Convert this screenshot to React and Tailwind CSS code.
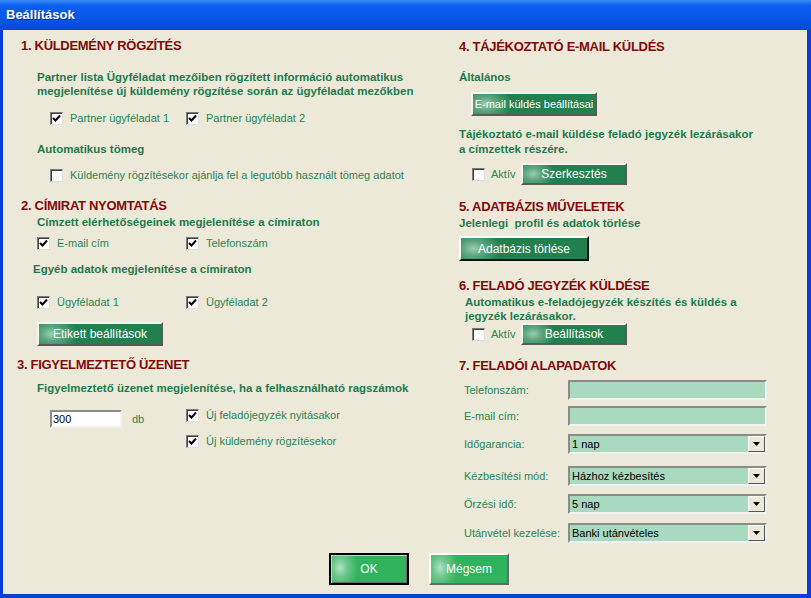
import React from 'react';

const green = 'text-[#1f7a4d]';
const label = 'text-[#2b8456]';

const Check = ({ checked }) => (
    <span className="inline-flex w-[13px] h-[13px] shrink-0 bg-white border-t border-l border-t-[#7a7a7a] border-l-[#7a7a7a] border-b border-r border-b-[#dcdcdc] border-r-[#dcdcdc] shadow-[inset_1px_1px_0_#404040] items-center justify-center">
        {checked && (
            <svg width="9" height="9" viewBox="0 0 9 9">
                <path d="M1 4 L3.5 6.5 L8 1.5" fill="none" stroke="#000" strokeWidth="2" />
            </svg>
        )}
    </span>
);

const CheckLabel = ({ checked, children, className = '' }) => (
    <div className={'flex items-center h-[16px] ' + className}>
        <Check checked={checked} />
        <span className={'ml-[7px] text-[11px] leading-[14px] ' + label}>{children}</span>
    </div>
);

const Heading = ({ children }) => (
    <h2 className="text-[13px] leading-[16px] font-bold text-[#820a0a] tracking-[-0.3px]">{children}</h2>
);

const GreenBtn = ({ children, className = '' }) => (
    <button
        className={
            'flex items-center justify-center text-white text-[11px] bg-[radial-gradient(ellipse_22%_90%_at_10%_50%,#9ccdb0_0%,#5aa57d_40%,#22804f_100%)] border-2 border-t-[#f4f4f4] border-l-[#f4f4f4] border-b-[#5a5a5a] border-r-[#5a5a5a] ' +
            className
        }
    >
        {children}
    </button>
);

const BigBtn = ({ children, className = '' }) => (
    <button
        className={
            'flex items-center justify-center text-white text-[12px] w-[80px] h-[32px] bg-[radial-gradient(ellipse_24%_85%_at_12%_45%,#b5e2c4_0%,#6cc78c_40%,#2fb35c_100%)] ' +
            className
        }
    >
        {children}
    </button>
);

const Field = ({ text, value, select, className = '' }) => (
    <div className={'flex items-center ' + className}>
        <span className={'w-[104px] text-[11px] ' + label}>{text}</span>
        <div className="w-[199px] h-[20px] flex items-center bg-[#a9d9bf] border-2 border-t-[#8b8b8b] border-l-[#8b8b8b] border-b-[#f2f2f2] border-r-[#f2f2f2]">
            <span className="flex-1 pl-[2px] text-[11px] text-black">{value}</span>
            {select && (
                <span className="w-[17px] h-[16px] flex items-center justify-center bg-[#ece9d8] border border-t-white border-l-white border-b-[#555] border-r-[#555]">
                    <svg width="7" height="4" viewBox="0 0 7 4">
                        <path d="M0 0 H7 L3.5 4 Z" fill="#000" />
                    </svg>
                </span>
            )}
        </div>
    </div>
);

const App = () => {
    return (
        <div className="w-[811px] h-[598px] overflow-hidden flex flex-col font-['Liberation_Sans',Arial,sans-serif] bg-[#ece9d8]">
            <div className="h-[30px] shrink-0 flex items-center pl-[6px] bg-[linear-gradient(180deg,#3b8cf7_0%,#0a5ff0_18%,#0757e8_60%,#0549d6_100%)]">
                <span className="text-white font-bold text-[13px] [text-shadow:1px_1px_0_#0a2f8a]">Beállítások</span>
            </div>

            <div className="flex-1 flex flex-col border-l-[3px] border-r-[4px] border-b-[4px] border-[#0a3fd4]">
                <div className="flex">
                    {/* left column */}
                    <div className="w-[439px] pl-[14px] pt-[8px] flex flex-col">
                        <div className="ml-[4px]">
                            <Heading>1. KÜLDEMÉNY RÖGZÍTÉS</Heading>
                        </div>
                        <p className={'ml-[20px] mt-[16px] text-[11.5px] leading-[14px] font-bold ' + green}>
                            Partner lista Ügyféladat mezőiben rögzített információ automatikus
                            <br />
                            megjelenítése új küldemény rögzítése során az ügyféladat mezőkben
                        </p>
                        <div className="flex mt-[12px] ml-[33px]">
                            <CheckLabel checked className="w-[136px]">Partner ügyféladat 1</CheckLabel>
                            <CheckLabel checked>Partner ügyféladat 2</CheckLabel>
                        </div>
                        <p className={'ml-[20px] mt-[16px] text-[11.5px] leading-[14px] font-bold ' + green}>Automatikus tömeg</p>
                        <CheckLabel className="ml-[33px] mt-[11px]">Küldemény rögzítésekor ajánlja fel a legutóbb használt tömeg adatot</CheckLabel>

                        <div className="mt-[15px] ml-[4px]">
                            <Heading>2. CÍMIRAT NYOMTATÁS</Heading>
                        </div>
                        <p className={'ml-[20px] mt-[1px] text-[11.5px] leading-[14px] font-bold ' + green}>Címzett elérhetőségeinek megjelenítése a címiraton</p>
                        <div className="flex mt-[6px] ml-[20px]">
                            <CheckLabel checked className="w-[149px]">E-mail cím</CheckLabel>
                            <CheckLabel checked>Telefonszám</CheckLabel>
                        </div>
                        <p className={'ml-[16px] mt-[11px] text-[11.5px] leading-[14px] font-bold ' + green}>Egyéb adatok megjelenítése a címiraton</p>
                        <div className="flex mt-[18px] ml-[20px]">
                            <CheckLabel checked className="w-[149px]">Ügyféladat 1</CheckLabel>
                            <CheckLabel checked>Ügyféladat 2</CheckLabel>
                        </div>
                        <GreenBtn className="ml-[20px] mt-[12px] w-[126px] h-[24px] text-[12px]">Etikett beállítások</GreenBtn>

                        <div className="mt-[11px]">
                            <Heading>3. FIGYELMEZTETŐ ÜZENET</Heading>
                        </div>
                        <p className={'ml-[20px] mt-[8px] text-[11.5px] leading-[14px] font-bold ' + green}>
                            Figyelmeztető üzenet megjelenítése, ha a felhasználható ragszámok
                        </p>
                        <div className="flex mt-[12px] ml-[33px]">
                            <div className="w-[136px] flex items-center h-[24px] self-start">
                                <div className="w-[72px] h-[18px] bg-white border-2 border-t-[#8b8b8b] border-l-[#8b8b8b] border-b-[#f2f2f2] border-r-[#f2f2f2] flex items-center pl-[1px] text-[11px] text-black">
                                    300
                                </div>
                                <span className={'ml-[10px] text-[11px] ' + label}>db</span>
                            </div>
                            <div className="flex flex-col gap-[10px]">
                                <CheckLabel checked>Új feladójegyzék nyitásakor</CheckLabel>
                                <CheckLabel checked>Új küldemény rögzítésekor</CheckLabel>
                            </div>
                        </div>
                    </div>

                    {/* right column */}
                    <div className="flex-1 pl-[17px] pt-[9px] flex flex-col">
                        <Heading>4. TÁJÉKOZTATÓ E-MAIL KÜLDÉS</Heading>
                        <p className={'mt-[15px] text-[11.5px] leading-[14px] font-bold ' + green}>Általános</p>
                        <GreenBtn className="ml-[12px] mt-[8px] w-[126px] h-[24px]">E-mail küldés beállításai</GreenBtn>
                        <p className={'mt-[11px] text-[11.5px] leading-[15px] font-bold ' + green}>
                            Tájékoztató e-mail küldése feladó jegyzék lezárásakor
                            <br />
                            a címzettek részére.
                        </p>
                        <div className="flex items-center h-[22px] mt-[6px] ml-[13px]">
                            <Check />
                            <span className={'ml-[6px] w-[30px] text-[11px] ' + label}>Aktív</span>
                            <GreenBtn className="w-[106px] h-[22px] text-[12px]">Szerkesztés</GreenBtn>
                        </div>

                        <div className="mt-[14px]">
                            <Heading>5. ADATBÁZIS MŰVELETEK</Heading>
                        </div>
                        <p className={'mt-[1px] text-[11.5px] leading-[14px] font-bold whitespace-pre ' + green}>Jelenlegi  profil és adatok törlése</p>
                        <button className="mt-[6px] w-[130px] h-[25px] flex items-center justify-center text-white text-[12px] bg-[radial-gradient(ellipse_22%_90%_at_10%_50%,#9ccdb0_0%,#5aa57d_40%,#22804f_100%)] border-2 border-t-white border-l-white border-b-[#111] border-r-[#111]">
                            Adatbázis törlése
                        </button>

                        <div className="mt-[17px]">
                            <Heading>6. FELADÓ JEGYZÉK KÜLDÉSE</Heading>
                        </div>
                        <p className={'ml-[6px] mt-[1px] text-[11.5px] leading-[14px] font-bold ' + green}>
                            Automatikus e-feladójegyzék készítés és küldés a
                            <br />
                            jegyzék lezárásakor.
                        </p>
                        <div className="flex items-center h-[22px] ml-[13px]">
                            <Check />
                            <span className={'ml-[6px] w-[30px] text-[11px] ' + label}>Aktív</span>
                            <GreenBtn className="w-[106px] h-[22px] text-[12px]">Beállítások</GreenBtn>
                        </div>

                        <div className="mt-[13px]">
                            <Heading>7. FELADÓI ALAPADATOK</Heading>
                        </div>
                        <div className="ml-[5px] flex flex-col">
                            <Field className="mt-[6px]" text="Telefonszám:" />
                            <Field className="mt-[6px]" text="E-mail cím:" />
                            <Field className="mt-[8px]" text="Időgarancia:" value="1 nap" select />
                            <Field className="mt-[12px]" text="Kézbesítési mód:" value="Házhoz kézbesítés" select />
                            <Field className="mt-[8px]" text="Őrzési idő:" value="5 nap" select />
                            <Field className="mt-[9px]" text="Utánvétel kezelése:" value="Banki utánvételes" select />
                        </div>
                    </div>
                </div>

                <div className="flex mt-[10px] pl-[326px] gap-[20px]">
                    <BigBtn className="border-2 border-black shadow-[inset_1px_1px_0_#cfcfcf,inset_-1px_-1px_0_#6a6a6a]">OK</BigBtn>
                    <BigBtn className="border-2 border-t-white border-l-white border-b-[#6a6a6a] border-r-[#6a6a6a]">Mégsem</BigBtn>
                </div>
            </div>
        </div>
    );
};

export default App;
